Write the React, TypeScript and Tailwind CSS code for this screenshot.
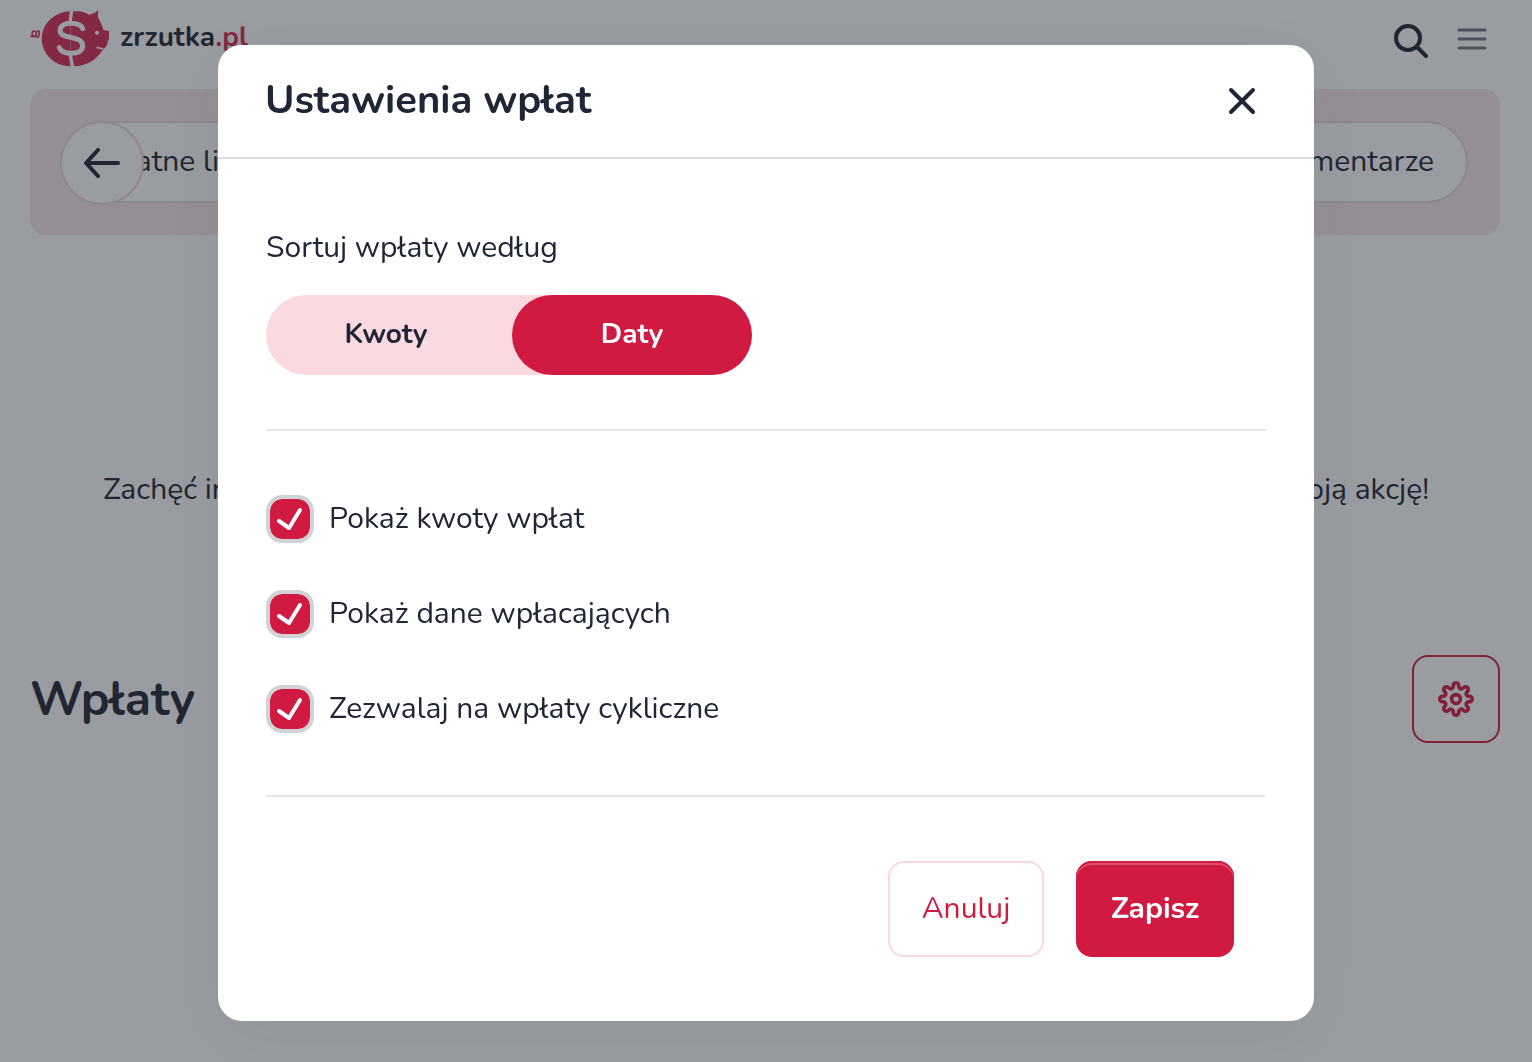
import React, { useState } from 'react';

type SortKey = 'amount' | 'date';

interface OptionProps {
  id: string;
  label: string;
  checked: boolean;
  onChange: (checked: boolean) => void;
}

// eight rounded teeth around the centre of a 36px box
const gearPath = (() => {
  const point = (radius: number, side: number, angle: number) => {
    const x = 18 + radius * Math.cos(angle) - side * Math.sin(angle);
    const y = 18 + radius * Math.sin(angle) + side * Math.cos(angle);
    return `${x.toFixed(2)} ${y.toFixed(2)}`;
  };
  const parts: string[] = [];
  for (let i = 0; i < 8; i++) {
    const angle = (i * Math.PI) / 4;
    parts.push(
      i === 0
        ? `M${point(12.6, -2.7, angle)}`
        : `A2.6 2.6 0 0 0 ${point(12.6, -2.7, angle)}`,
      `L${point(13.5, -2.7, angle)}`,
      `A2.7 2.7 0 0 1 ${point(13.5, 2.7, angle)}`,
      `L${point(12.6, 2.7, angle)}`,
    );
  }
  parts.push(`A2.6 2.6 0 0 0 ${point(12.6, -2.7, 0)}Z`);
  return parts.join('');
})();

const PigLogo = () => (
  <svg width="80" height="57" viewBox="30 30 240 171" fill="none" aria-hidden="true">
    <path
      d="M151 34A86 82.5 0 0 0 151 199ZM150 34H176C189 35 199 39 207 44C218 42 227 37 235 31C233 42 232 51 239 62C245 71 248 80 250 90L267 93V118C264 122 262 127 262 133C258 140 254 145 248 150C230 179 202 198 160 199H150Z"
      fill="#d72c55"
    />
    <path
      d="M155 30L150 68M150 160L158 203"
      stroke="white"
      strokeWidth="10"
    />
    <path
      d="M188 86C184 75 169 70 153 70C132 70 120 78 120 92C120 120 188 104 188 137C188 152 174 160 154 160C137 160 123 155 118 143"
      stroke="white"
      strokeWidth="15"
      strokeLinecap="round"
    />
    <circle cx="231" cy="98" r="6" fill="white" />
    <path d="M230 142L250 147" stroke="white" strokeWidth="5" />
    <path
      d="M31 109H44C51 108 50 94 42 93C35 93 35 105 40 109M50 93H57V106C57 111 52 113 49 110"
      stroke="#d72c55"
      strokeWidth="5"
    />
  </svg>
);

const SearchIcon = () => (
  <svg width="36" height="36" viewBox="0 0 36 36" fill="none" stroke="currentColor" strokeWidth="4" strokeLinecap="round" aria-hidden="true">
    <circle cx="15" cy="15" r="12" />
    <path d="M24 24L33 33" />
  </svg>
);

const MenuIcon = () => (
  <svg width="30" height="24" viewBox="0 0 30 24" stroke="currentColor" strokeWidth="3" strokeLinecap="round" aria-hidden="true">
    <path d="M2 3H28M2 12H28M2 21H28" />
  </svg>
);

const Option = ({ id, label, checked, onChange }: OptionProps) => (
  <div className="flex items-center gap-[15px]">
    <span className="relative flex size-12">
      <input
        id={id}
        type="checkbox"
        checked={checked}
        onChange={(e) => onChange(e.target.checked)}
        className="peer size-12 appearance-none rounded-2xl border-4 border-[#d1d2d5] bg-white bg-clip-padding checked:bg-[#d11a41]"
      />
      <svg
        viewBox="0 0 48 48"
        fill="none"
        className="pointer-events-none absolute inset-0 hidden size-12 peer-checked:block"
        aria-hidden="true"
      >
        <path
          d="M13 26L23 33L34 15"
          stroke="white"
          strokeWidth="4"
          strokeLinecap="round"
          strokeLinejoin="round"
        />
      </svg>
    </span>
    <label htmlFor={id} className="text-[30px] leading-10">
      {label}
    </label>
  </div>
);

const Background = () => (
  <div className="min-h-screen bg-white">
    <header className="flex h-[89px] items-center justify-between px-[30px] pb-3">
      <a href="#" className="flex items-center gap-[10px]">
        <PigLogo />
        <span className="pb-1 text-[28px] leading-9 font-bold">
          zrzutka<span className="text-[#d72c55]">.pl</span>
        </span>
      </a>
      <div className="flex items-center gap-7 pr-[15px]">
        <button type="button" aria-label="Szukaj" className="pt-1">
          <SearchIcon />
        </button>
        <button type="button" aria-label="Menu" className="text-[#77737f]">
          <MenuIcon />
        </button>
      </div>
    </header>

    <nav className="mr-8 ml-[30px] rounded-2xl bg-[#f8e6ea] p-8">
      <div className="relative flex h-[82px] items-center justify-between rounded-full border-2 border-[#e9d7dc] bg-white pr-8 pl-11 text-[30px] leading-10">
        <a href="#">Płatne linki</a>
        <a href="#">Komentarze</a>
        <button
          type="button"
          aria-label="Wstecz"
          className="absolute -top-[2px] -left-1 flex size-[84px] items-center justify-center rounded-full border-2 border-[#e9d7dc] bg-white"
        >
          <svg width="38" height="30" viewBox="0 0 38 30" fill="none" stroke="currentColor" strokeWidth="4" strokeLinecap="round" strokeLinejoin="round" aria-hidden="true">
            <path d="M35 15H3M15 2L3 15L15 28" />
          </svg>
        </button>
      </div>
    </nav>

    <div className="flex justify-between px-[103px] pt-[235px] text-[30px] leading-10">
      <p>Zachęć innych</p>
      <p>Promuj swoją akcję!</p>
    </div>

    <section className="flex items-center justify-between pt-[145px] pr-8 pl-[30px]">
      <h1 className="text-[48px] leading-14 font-bold">Wpłaty</h1>
      <button
        type="button"
        aria-label="Ustawienia"
        className="flex size-[88px] items-center justify-center rounded-2xl border-2 border-[#d11a41] text-[#d11a41]"
      >
        <svg width="36" height="36" viewBox="0 0 36 36" fill="none" stroke="currentColor" strokeWidth="3.6" strokeLinejoin="round" aria-hidden="true">
          <path d={gearPath} />
          <circle cx="18" cy="18" r="4.4" />
        </svg>
      </button>
    </section>
  </div>
);

export default function App() {
  const [sort, setSort] = useState<SortKey>('date');
  const [showAmounts, setShowAmounts] = useState(true);
  const [showDonors, setShowDonors] = useState(true);
  const [allowRecurring, setAllowRecurring] = useState(true);

  return (
    <div className="font-[Nunito,Lato,'Noto_Sans',sans-serif] text-[#202635]">
      <Background />

      <div className="fixed inset-0 flex items-start justify-center overflow-auto bg-[#21282f]/46 px-4 pt-[45px]">
        <div
          role="dialog"
          aria-labelledby="settings-title"
          className="w-full max-w-[1096px] rounded-3xl bg-white shadow-[0_16px_64px_rgba(32,38,53,0.06)]"
        >
          <div className="flex h-[114px] items-center justify-between border-b-2 border-[#dcdddf] pr-[58px] pl-[47px]">
            <h2 id="settings-title" className="pb-[2px] text-[40px] leading-12 font-bold">
              Ustawienia wpłat
            </h2>
            <button type="button" aria-label="Zamknij">
              <svg width="28" height="28" viewBox="0 0 28 28" stroke="currentColor" strokeWidth="4" strokeLinecap="round" aria-hidden="true">
                <path d="M3 3L25 25M25 3L3 25" />
              </svg>
            </button>
          </div>

          <form className="px-12 pb-16" onSubmit={(e) => e.preventDefault()}>
            <div role="radiogroup" aria-labelledby="sort-label" className="pt-[69px] pb-[54px]">
              <p id="sort-label" className="text-[30px] leading-10">
                Sortuj wpłaty według
              </p>
              <div className="mt-[27px] flex h-20 max-w-[486px] justify-between rounded-full bg-[#fad9e0] text-[28px] leading-9 font-bold">
                <label className="relative flex w-60 items-center justify-center rounded-full pb-[2px] has-checked:bg-[#d11a41] has-checked:text-white">
                  <input
                    type="radio"
                    name="sort"
                    className="absolute inset-0 appearance-none rounded-full"
                    checked={sort === 'amount'}
                    onChange={() => setSort('amount')}
                  />
                  Kwoty
                </label>
                <label className="relative flex w-60 items-center justify-center rounded-full pb-[2px] has-checked:bg-[#d11a41] has-checked:text-white">
                  <input
                    type="radio"
                    name="sort"
                    className="absolute inset-0 appearance-none rounded-full"
                    checked={sort === 'date'}
                    onChange={() => setSort('date')}
                  />
                  Daty
                </label>
              </div>
            </div>

            <div className="flex flex-col gap-[47px] border-y-2 border-[#e7e7e8] pt-16 pb-[62px]">
              <Option
                id="show-amounts"
                label="Pokaż kwoty wpłat"
                checked={showAmounts}
                onChange={setShowAmounts}
              />
              <Option
                id="show-donors"
                label="Pokaż dane wpłacających"
                checked={showDonors}
                onChange={setShowDonors}
              />
              <Option
                id="allow-recurring"
                label="Zezwalaj na wpłaty cykliczne"
                checked={allowRecurring}
                onChange={setAllowRecurring}
              />
            </div>

            <div className="flex justify-end gap-8 pt-16 pr-8 text-[30px] leading-10">
              <button
                type="button"
                className="h-24 w-[156px] rounded-2xl border-2 border-[#fad9e0] text-[#d11a41]"
              >
                Anuluj
              </button>
              <button
                type="submit"
                className="h-24 w-[158px] rounded-2xl bg-[#d11a41] font-bold text-white shadow-[inset_0_2px_0_#d11a41,inset_0_4px_0_#dd4d6c]"
              >
                Zapisz
              </button>
            </div>
          </form>
        </div>
      </div>
    </div>
  );
}
